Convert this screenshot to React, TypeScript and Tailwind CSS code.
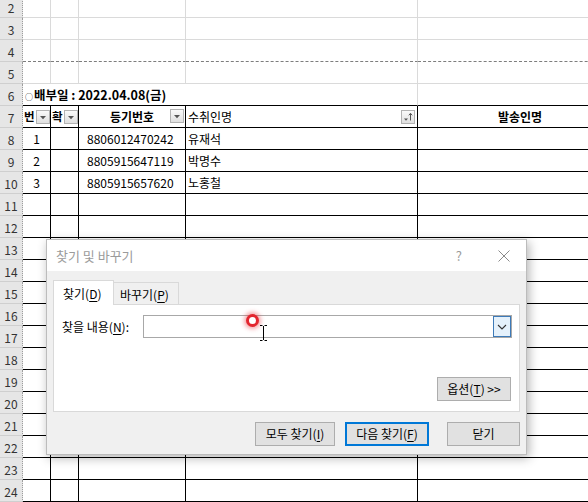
import React from "react";

const rowNums = Array.from({ length: 23 }, (_, i) => i + 2);

function FilterBtn({ sort }: { sort?: boolean }) {
  return (
    <div className="w-[14px] h-[14px] border border-[#b3b3b3] bg-linear-to-b from-[#fafafa] to-[#e0e0e0] flex items-center justify-center shrink-0">
      <svg width="12" height="12" viewBox="0 0 12 12">
        {sort ? (
          <>
            <path d="M2 7.5h4l-2 2.2z" fill="#555" />
            <path d="M8.5 2.5v7" stroke="#555" strokeWidth="1" />
            <path d="M6.8 4.3l1.7-2 1.7 2" stroke="#555" strokeWidth="1" fill="none" />
          </>
        ) : (
          <path d="M3 5h6l-3 3.2z" fill="#555" />
        )}
      </svg>
    </div>
  );
}

function RowHead({ n }: { n: number }) {
  return (
    <div className="w-[23px] shrink-0 h-full bg-[#e6e6e6] border-r border-r-[#9d9d9d] [border-right-style:dotted] border-b border-b-[#cfcfcf] flex items-center justify-center pt-[2px] text-[12px] text-[#333]">
      {n}
    </div>
  );
}

const W = { a: "w-[28px]", b: "w-[28px]", c: "w-[107px]", d: "w-[232px]", e: "w-[205px]" };

function Row({ n }: { n: number }) {
  const gray = "shrink-0 h-full border-r border-b border-[#dadada]";
  const blk = "shrink-0 h-full border-r border-b border-black";
  if (n <= 5) {
    const extra = n === 4 ? " [border-bottom-style:dashed] border-b-[#7d7d7d]" : "";
    return (
      <div className="flex h-[22px]">
        <RowHead n={n} />
        <div className={`${W.a} ${gray}${extra}`} />
        <div className={`${W.b} ${gray}${extra}`} />
        <div className={`${W.c} ${gray}${extra}`} />
        <div className={`${W.d} ${gray}${extra}`} />
        <div className={`${W.e} ${gray}${extra}`} />
      </div>
    );
  }
  if (n === 6) {
    return (
      <div className="flex h-[22px]">
        <RowHead n={n} />
        <div className="w-[395px] shrink-0 h-full border-r border-r-[#dadada] border-b border-b-black flex items-center pl-[2px] pt-[1px] font-bold text-[12.5px] whitespace-nowrap">
          <span className="text-[8px] font-normal mr-[1px] pt-[3px]">○</span>배부일 : 2022.04.08(금)
        </div>
        <div className={`${W.e} shrink-0 h-full border-r border-r-[#dadada] border-b border-b-black`} />
      </div>
    );
  }
  if (n === 7) {
    return (
      <div className="flex h-[22px]">
        <RowHead n={n} />
        <div className={`${W.a} ${blk} flex items-center justify-between pl-[1px]`}>
          <span className="font-bold text-[11.5px] whitespace-nowrap">번</span>
          <FilterBtn />
        </div>
        <div className={`${W.b} ${blk} flex items-center justify-between pl-[1px]`}>
          <span className="font-bold text-[11.5px] whitespace-nowrap">확</span>
          <FilterBtn />
        </div>
        <div className={`${W.c} ${blk} relative flex items-center justify-center font-bold text-[12px]`}>
          <span>등기번호</span>
          <div className="absolute right-[1px] top-[3px]">
            <FilterBtn />
          </div>
        </div>
        <div className={`${W.d} ${blk} flex items-center justify-between pl-[2px] pr-[2px] text-[12px]`}>
          <span>수취인명</span>
          <FilterBtn sort />
        </div>
        <div className={`${W.e} ${blk} flex items-center justify-center font-bold text-[12px]`}>발송인명</div>
      </div>
    );
  }
  const data: Record<number, [string, string, string]> = {
    8: ["1", "8806012470242", "유재석"],
    9: ["2", "8805915647119", "박명수"],
    10: ["3", "8805915657620", "노홍철"],
  };
  const d = data[n];
  return (
    <div className="flex h-[22px] text-[12px]">
      <RowHead n={n} />
      <div className={`${W.a} ${blk} flex items-center justify-center`}>{d ? d[0] : ""}</div>
      <div className={`${W.b} ${blk}`} />
      <div className={`${W.c} ${blk} flex items-center pl-[8px]`}>{d ? d[1] : ""}</div>
      <div className={`${W.d} ${blk} flex items-center pl-[2px]`}>{d ? d[2] : ""}</div>
      <div className={`${W.e} ${blk}`} />
    </div>
  );
}

function Btn({ children, className = "" }: { children: React.ReactNode; className?: string }) {
  return (
    <div className={`h-[24px] bg-[#e1e1e1] flex items-center justify-center text-[12px] text-black ${className}`}>
      {children}
    </div>
  );
}

function Dialog() {
  return (
    <div className="absolute left-[46px] top-[239px] w-[481px] h-[216px] border border-[#bcbcbc] bg-[#f0f0f0] shadow-[2px_3px_10px_rgba(0,0,0,0.3)] flex flex-col text-[12px]">
      <div className="h-[31px] bg-white flex items-center pl-[9px] pr-[16px] text-[#9b9b9b] text-[13px] shrink-0">
        <span>찾기 및 바꾸기</span>
        <span className="ml-auto mr-[36px] text-[13px]">?</span>
        <svg width="12" height="12" viewBox="0 0 12 12">
          <path d="M0.5 0.5l11 11M11.5 0.5l-11 11" stroke="#8a8a8a" strokeWidth="1" />
        </svg>
      </div>
      <div className="flex-1 flex flex-col px-[6px] pt-[8px]">
        <div className="flex items-end h-[25px]">
          <div className="relative z-10 h-[25px] w-[61px] bg-white border border-b-0 border-[#d9d9d9] -mb-px flex items-center pl-[9px] pt-[1px]">
            찾기(<span className="underline underline-offset-2">D</span>)
          </div>
          <div className="h-[22px] w-[65px] border border-l-0 border-b-0 border-[#d9d9d9] bg-[#f0f0f0] flex items-center pl-[6px] pt-[2px]">
            바꾸기(<span className="underline underline-offset-2">P</span>)
          </div>
        </div>
        <div className="h-[108px] bg-white border border-[#d9d9d9] flex flex-col pl-[8px] pr-[7px] pt-[10px] pb-[10px]">
          <div className="flex items-center h-[23px]">
            <span className="w-[81px] shrink-0">
              찾을 내용(<span className="underline underline-offset-2">N</span>):
            </span>
            <div className="flex-1 h-[23px] border border-[#a8a8a8] bg-white flex justify-end">
              <div className="w-[18px] h-[21px] border border-[#3d7ab8] bg-[#e5f1fb] flex items-center justify-center">
                <svg width="10" height="6" viewBox="0 0 10 6">
                  <path d="M1 1l4 4 4-4" stroke="#333" strokeWidth="1.1" fill="none" />
                </svg>
              </div>
            </div>
          </div>
          <div className="mt-auto flex justify-end pr-[1px]">
            <Btn className="w-[74px] border border-[#adadad]">
              옵션(<span className="underline underline-offset-2">T</span>)&nbsp;&gt;&gt;
            </Btn>
          </div>
        </div>
        <div className="flex justify-end mt-[10px]">
          <Btn className="w-[80px] border border-[#adadad]">
            모두 찾기(<span className="underline underline-offset-2">I</span>)
          </Btn>
          <Btn className="w-[84px] ml-[10px] border-2 border-[#0078d7]">
            다음 찾기(<span className="underline underline-offset-2">F</span>)
          </Btn>
          <Btn className="w-[73px] ml-[18px] border border-[#adadad]">닫기</Btn>
        </div>
      </div>
    </div>
  );
}

function Cursor() {
  return (
    <>
      <div className="absolute left-[246px] top-[314px] w-[13px] h-[13px] rounded-full border-[3px] border-[#e3262f] bg-white shadow-[0_0_4px_2px_rgba(230,50,60,0.45)]" />
      <svg className="absolute left-[259px] top-[324px]" width="9" height="18" viewBox="0 0 9 18">
        <path d="M1 1.5h2.5M5.5 1.5H8M4.5 2v14M1 16.5h2.5M5.5 16.5H8" stroke="#000" strokeWidth="1" fill="none" />
      </svg>
    </>
  );
}

export default function App() {
  return (
    <div className="relative w-[588px] h-[502px] overflow-hidden bg-white font-['Noto_Sans_CJK_KR',sans-serif] text-black">
      <div className="-mt-[4px] flex flex-col">
        {rowNums.map((n) => (
          <Row key={n} n={n} />
        ))}
      </div>
      <Dialog />
      <Cursor />
    </div>
  );
}
